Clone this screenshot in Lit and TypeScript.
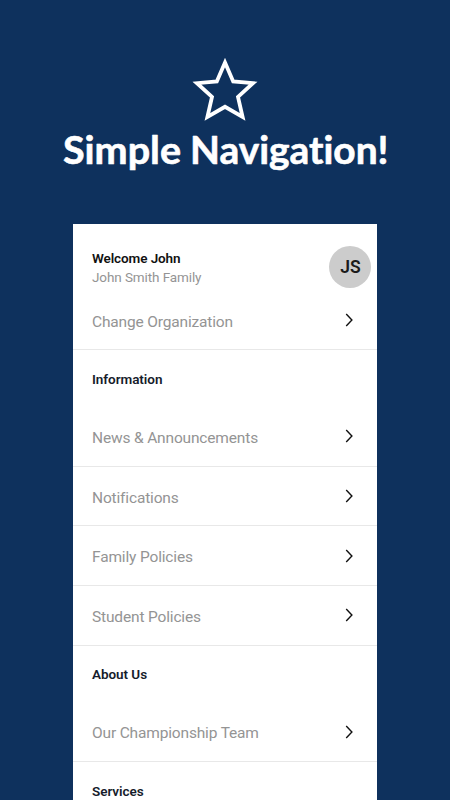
import { LitElement, html, css } from "lit";
import { customElement, property } from "lit/decorators.js";

@customElement("nav-row")
class NavRow extends LitElement {
  @property() label = "";

  static styles = css`
    :host {
      display: flex;
      align-items: center;
      justify-content: space-between;
      box-sizing: border-box;
      flex: none;
      height: 59.6px;
      padding: 0 22px 0 19px;
      border-bottom: 1px solid #e8e8e8;
      color: #949494;
      font: 400 15.5px/20px Roboto, sans-serif;
      letter-spacing: -0.16px;
    }
    .label {
      margin-top: 2.8px;
    }
    .chevron {
      display: block;
      width: 12px;
      height: 14px;
      margin-top: -0.5px;
      fill: none;
      stroke: #111;
      stroke-width: 1.4;
    }
  `;

  render() {
    return html`<span class="label">${this.label}</span>
      <svg class="chevron" viewBox="0 0 12 14"><path d="M3.2 1 L8.9 7 L3.2 13" /></svg>`;
  }
}

const sections = [
  { title: "Information", rows: ["News & Announcements", "Notifications", "Family Policies", "Student Policies"] },
  { title: "About Us", rows: ["Our Championship Team"] },
  { title: "Services", rows: [] },
];

@customElement("app-root")
class AppRoot extends LitElement {
  static styles = css`
    :host {
      display: flex;
      flex-direction: column;
      align-items: center;
      box-sizing: border-box;
      width: 450px;
      height: 800px;
      overflow: hidden;
      background: #0e315d;
      font-family: Roboto, sans-serif;
    }
    .star {
      display: block;
      flex: none;
      width: 70px;
      height: 68px;
      margin-top: 56px;
      fill: none;
      stroke: #fff;
      stroke-width: 3.8;
    }
    .heading {
      display: block;
      flex: none;
      width: 450px;
      height: 60px;
      margin-bottom: 40px;
      fill: #fff;
      stroke: #fff;
      stroke-width: 0.6;
      stroke-linejoin: round;
      font: 700 37.5px Lato, sans-serif;
      font-variant-ligatures: none;
    }
    .panel {
      display: flex;
      flex-direction: column;
      flex: none;
      width: 304px;
      height: 576px;
      overflow: hidden;
      background: #fff;
    }
    .profile {
      display: flex;
      justify-content: space-between;
      box-sizing: border-box;
      flex: none;
      height: 66.9px;
      padding: 22.4px 5.6px 0 19px;
    }
    .who {
      padding-top: 2.6px;
      font-size: 13.5px;
      line-height: 19px;
      letter-spacing: -0.1px;
      color: #949494;
    }
    .name {
      font-weight: 600;
      color: #111;
    }
    .avatar {
      width: 42px;
      height: 42px;
      border-radius: 50%;
      background: #ccc;
      color: #1b1b1b;
      font-size: 17.5px;
      font-weight: 600;
      line-height: 43px;
      text-align: center;
    }
    .title {
      box-sizing: border-box;
      flex: none;
      height: 56.8px;
      padding: 19.6px 19px 0;
      color: #161c2b;
      font-size: 13.5px;
      font-weight: 600;
      letter-spacing: -0.05px;
      line-height: 19px;
    }
  `;

  render() {
    return html`
      <svg class="star" viewBox="190 56 70 68">
        <path d="M225 62.5 L233.2 81.5 L253 83.2 L238 96.8 L242.6 117 L225 106.8 L207.4 117 L212 96.8 L197 83.2 L216.8 81.5 Z" />
      </svg>
      <svg class="heading" viewBox="0 124 450 60">
        <text x="63" y="163.7" textLength="118" lengthAdjust="spacingAndGlyphs">Simple</text>
        <text x="190" y="163.7" textLength="198.5" lengthAdjust="spacingAndGlyphs">Navigation!</text>
      </svg>
      <div class="panel">
        <div class="profile">
          <div class="who">
            <div class="name">Welcome John</div>
            <div>John Smith Family</div>
          </div>
          <div class="avatar">JS</div>
        </div>
        <nav-row label="Change Organization"></nav-row>
        ${sections.map(
          (s) => html`<div class="title">${s.title}</div>
            ${s.rows.map((r) => html`<nav-row .label=${r}></nav-row>`)}`
        )}
      </div>
    `;
  }
}
